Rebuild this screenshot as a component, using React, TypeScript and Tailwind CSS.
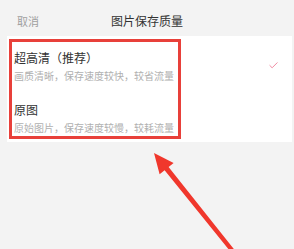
import { Check } from "lucide-react";

const options = [
  { title: "超高清（推荐）", desc: "画质清晰，保存速度较快，较省流量" },
  { title: "原图", desc: "原始图片，保存速度较慢，较耗流量" },
];

export default function App() {
  return (
    <div className="relative w-[294px] h-[249px] overflow-hidden bg-[#f3f3f3] font-['Noto_Sans_CJK_SC',sans-serif]">
      {/* header */}
      <div className="grid grid-cols-[1fr_auto_1fr] items-center h-[36px] pt-[6px]">
        <span className="pl-[17px] text-[11px] text-[#a0a0a0]">取消</span>
        <span className="text-[12px] text-[#333]">图片保存质量</span>
        <span />
      </div>

      {/* options panel */}
      <div className="flex ml-[7px] mr-[2px] h-[106px] bg-white pt-[3px] pl-[2px]">
        <div className="w-[172px] h-[100px] border-[3px] border-[#e8403a] pl-[2px] pt-[8px]">
          {options.map((o, i) => (
            <div key={o.title} className={i > 0 ? "mt-[19px]" : ""}>
              <div className="text-[12px] leading-[16px] text-[#333]">{o.title}</div>
              <div className="mt-[3px] text-[10px] leading-[14px] text-[#b0b0b0] whitespace-nowrap">
                {o.desc}
              </div>
            </div>
          ))}
        </div>
        <div className="ml-auto mr-[13px] mt-[21px] self-start">
          <Check className="w-[11px] h-[11px] text-[#e9607f]" strokeWidth={1.6} />
        </div>
      </div>

      {/* annotation arrow */}
      <svg className="absolute inset-0 pointer-events-none" width="294" height="249" viewBox="0 0 294 249">
        <polygon
          points="154,153 173.6,162.9 168.6,167 237,253 234,256 164.6,170.2 159.6,174.3"
          fill="#f0372c"
        />
      </svg>
    </div>
  );
}
